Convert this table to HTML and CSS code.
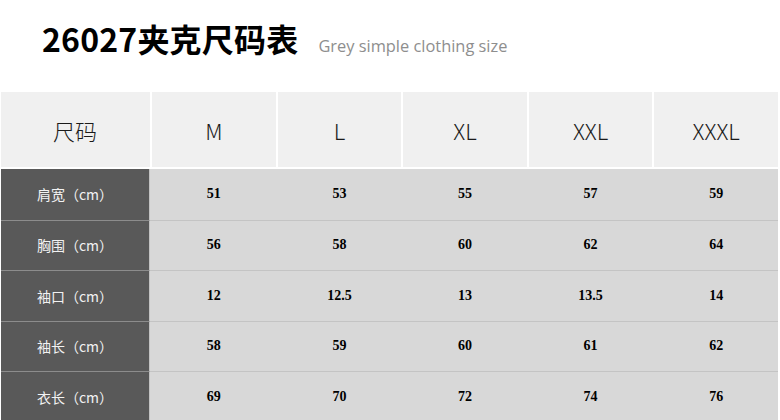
FILE: index.html
```html
<!DOCTYPE html>
<html lang="zh">
<head>
<meta charset="utf-8">
<title>26027夹克尺码表</title>
<link rel="stylesheet" href="styles.css">
</head>
<body>
<div class="page">
  <header class="title-bar">
    <h1 class="title">26027夹克尺码表</h1>
    <span class="subtitle">Grey simple clothing size</span>
  </header>
  <div class="chart">
    <div class="hcell first">尺码</div>
    <div class="hcell">M</div>
    <div class="hcell">L</div>
    <div class="hcell">XL</div>
    <div class="hcell">XXL</div>
    <div class="hcell">XXXL</div>

    <div class="label top">肩宽（cm）</div>
    <div class="val top">51</div><div class="val top">53</div><div class="val top">55</div><div class="val top">57</div><div class="val top">59</div>

    <div class="label">胸围（cm）</div>
    <div class="val">56</div><div class="val">58</div><div class="val">60</div><div class="val">62</div><div class="val">64</div>

    <div class="label">袖口（cm）</div>
    <div class="val">12</div><div class="val">12.5</div><div class="val">13</div><div class="val">13.5</div><div class="val">14</div>

    <div class="label">袖长（cm）</div>
    <div class="val">58</div><div class="val">59</div><div class="val">60</div><div class="val">61</div><div class="val">62</div>

    <div class="label">衣长（cm）</div>
    <div class="val">69</div><div class="val">70</div><div class="val">72</div><div class="val">74</div><div class="val">76</div>
  </div>
</div>
</body>
</html>
```

FILE: styles.css
```css
html, body {
  margin: 0;
  padding: 0;
  background: #ffffff;
}

.page {
  width: 780px;
  height: 420px;
  overflow: hidden;
  font-family: "Noto Sans CJK SC", "Noto Sans", sans-serif;
}

.title-bar {
  height: 92px;
  box-sizing: border-box;
  padding: 16px 0 0 42px;
  display: flex;
  align-items: baseline;
  gap: 20px;
}

.title {
  margin: 0;
  font-size: 32px;
  font-weight: 700;
  color: #000;
  line-height: 44px;
  letter-spacing: 0.2px;
}

.subtitle {
  font-size: 16.4px;
  color: #8e8e8e;
  font-family: "Open Sans", "Noto Sans", sans-serif;
}

.chart {
  margin-left: 1px;
  width: 777px;
  display: grid;
  grid-template-columns: 149px repeat(5, 1fr);
  grid-template-rows: 77px repeat(5, 50.5px);
  background: #ffffff;
}

.hcell {
  background: #f0f0f0;
  background-clip: padding-box;
  display: flex;
  align-items: center;
  justify-content: center;
  font-size: 22px;
  font-weight: 300;
  color: #1a1a1a;
  border-bottom: 2px solid #ffffff;
  border-left: 2px solid #ffffff;
}

.hcell.first {
  border-left: 0;
  padding-right: 1px;
}

.label {
  background: #595959;
  color: #f2f2f2;
  display: flex;
  align-items: center;
  justify-content: center;
  font-size: 14px;
  border-top: 1px solid #8c8c8c;
  border-right: 1px solid #c2c2c2;
}

.val {
  background: #d8d8d8;
  display: flex;
  align-items: center;
  justify-content: center;
  font-family: "Liberation Serif", serif;
  font-weight: 700;
  font-size: 14px;
  color: #000;
  border-top: 1px solid #c4c4c4;
  padding-left: 2px;
}

.label.top,
.val.top {
  border-top: 0;
}
```
